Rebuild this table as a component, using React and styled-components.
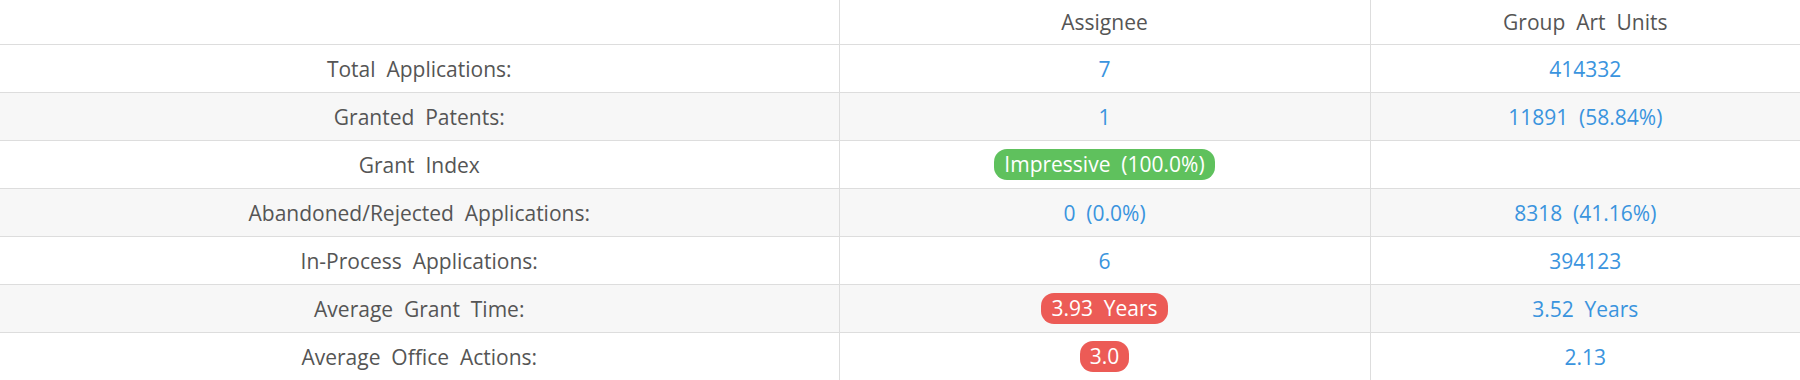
import styled, { createGlobalStyle } from "styled-components";

const rows = [
  { label: "Total  Applications:", assignee: "7", group: "414332" },
  { label: "Granted  Patents:", assignee: "1", group: "11891  (58.84%)" },
  { label: "Grant  Index", assignee: { badge: "good", text: "Impressive  (100.0%)" }, group: "" },
  { label: "Abandoned/Rejected  Applications:", assignee: "0  (0.0%)", group: "8318  (41.16%)" },
  { label: "In-Process  Applications:", assignee: "6", group: "394123" },
  { label: "Average  Grant  Time:", assignee: { badge: "bad", text: "3.93  Years" }, group: "3.52  Years" },
  { label: "Average  Office  Actions:", assignee: { badge: "bad", text: "3.0" }, group: "2.13" },
];

function Value({ value }) {
  if (!value) return null;
  if (typeof value === "object") return <Badge $tone={value.badge}>{value.text}</Badge>;
  return <Link>{value}</Link>;
}

export default function App() {
  return (
    <>
      <GlobalStyle />
      <Table>
        <colgroup>
          <col style={{ width: 839 }} />
          <col style={{ width: 531 }} />
          <col />
        </colgroup>
        <thead>
          <tr>
            <HeadCell />
            <HeadCell>Assignee</HeadCell>
            <HeadCell>Group  Art  Units</HeadCell>
          </tr>
        </thead>
        <tbody>
          {rows.map((row, i) => (
            <Row key={i} $striped={i % 2 === 1}>
              <Cell>{row.label}</Cell>
              <Cell>
                <Value value={row.assignee} />
              </Cell>
              <Cell>
                <Value value={row.group} />
              </Cell>
            </Row>
          ))}
        </tbody>
      </Table>
    </>
  );
}

const GlobalStyle = createGlobalStyle`
  body {
    margin: 0;
    background: #fff;
    font-family: "Open Sans", "Noto Sans", sans-serif;
  }
`;

const Table = styled.table`
  width: 1800px;
  table-layout: fixed;
  border-collapse: collapse;
  font-size: 21px;
  color: #555;
  white-space: pre;
`;

const HeadCell = styled.th`
  height: 44px;
  padding: 0;
  font-weight: 400;
  text-align: center;
  vertical-align: middle;
  border-left: 1px solid #ddd;
  border-bottom: 1px solid #ddd;

  &:first-child {
    border-left: none;
  }
`;

const Row = styled.tr`
  background: ${(p) => (p.$striped ? "#f7f7f7" : "#fff")};
`;

const Cell = styled.td`
  height: 47px;
  padding: 0;
  text-align: center;
  vertical-align: middle;
  border-left: 1px solid #ddd;
  border-bottom: 1px solid #ddd;

  &:first-child {
    border-left: none;
  }
`;

const Link = styled.span`
  color: #3a94de;
`;

const Badge = styled.span`
  display: inline-block;
  padding: 2px 10px;
  border-radius: 13px;
  color: #fff;
  line-height: 27px;
  background: ${(p) => (p.$tone === "good" ? "#5fc15d" : "#ec5b56")};
`;
